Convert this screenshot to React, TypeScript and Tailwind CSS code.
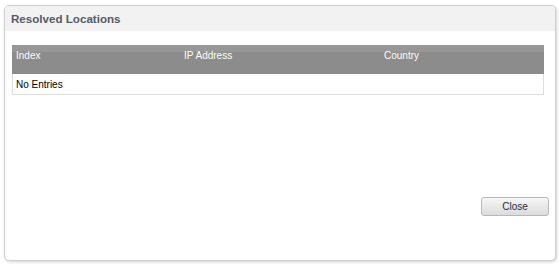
export default function App() {
  const font = { fontFamily: 'Tahoma, "Liberation Sans", Arial, sans-serif' };
  return (
    <div className="w-[559px] h-[266px] bg-white pt-[5px] pl-[4px]" style={font}>
      <div className="w-[552px] h-[256px] rounded-[5px] border border-[#d0d0d0] shadow-[1px_1px_3px_rgba(0,0,0,0.18)] bg-white flex flex-col overflow-hidden">
        <div className="h-[25px] bg-[#f2f2f2] flex items-center pl-[6px] shrink-0">
          <span className="text-[11.6px] font-bold text-[#555b66]">Resolved Locations</span>
        </div>
        <div className="pt-[14px] pl-[7px] pr-[10px]">
          <div className="w-[532px]">
            <div className="h-[29px] bg-[#8c8c8c] text-white text-[10px] flex flex-col">
              <div className="h-[7px] bg-[#979797]" />
              <div className="flex -mt-[4px]">
                <div className="w-[168px] pl-[4px]">Index</div>
                <div className="w-[200px] pl-[4px]">IP Address</div>
                <div className="flex-1 pl-[4px]">Country</div>
              </div>
            </div>
            <div className="h-[21px] border border-t-0 border-[#dddddd] flex items-center pl-[3px] pt-[1px] text-[10px] text-black">
              No Entries
            </div>
          </div>
        </div>
        <div className="flex-1 flex justify-end items-start pt-[102px] pr-[6px]">
          <button className="w-[68px] h-[19px] rounded-[3px] border border-[#b8b8b8] bg-gradient-to-b from-[#f6f6f6] to-[#dcdcdc] text-[10px] text-[#222a44] flex items-center justify-center">
            Close
          </button>
        </div>
      </div>
    </div>
  );
}
